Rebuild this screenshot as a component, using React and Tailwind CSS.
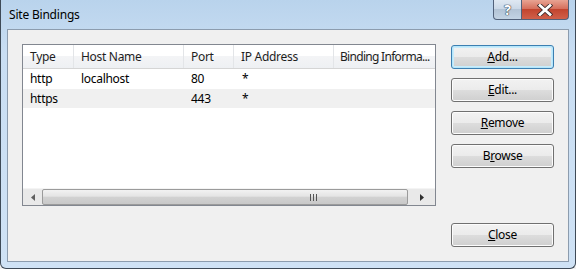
import React from 'react';

const font = { fontFamily: '"Noto Sans", "Segoe UI", Arial, sans-serif' };

const Btn = ({ children, primary = false }) => (
  <button
    className={
      primary
        ? 'w-[103px] h-[24px] rounded-[3px] border border-[#3c7fb1] shadow-[inset_0_0_0_1px_#b6e6fb,inset_0_0_0_2px_#c8ecfb] bg-[linear-gradient(#f2f2f2_0%,#ebebeb_50%,#dddddd_50%,#cfcfcf_100%)] text-[12px] tracking-[-0.3px] text-black flex items-center justify-center'
        : 'w-[103px] h-[24px] rounded-[3px] border border-[#707070] shadow-[inset_0_0_0_1px_#fcfcfc] bg-[linear-gradient(#f2f2f2_0%,#ebebeb_50%,#dddddd_50%,#cfcfcf_100%)] text-[12px] tracking-[-0.3px] text-black flex items-center justify-center'
    }
  >
    {children}
  </button>
);

const cols = [
  { label: 'Type', w: 'w-[51px]', h: 'pl-[7px] tracking-[-0.3px] border-r border-[#e3e5e8]' },
  { label: 'Host Name', w: 'w-[110px]', h: 'pl-[7px] tracking-[-0.3px] border-r border-[#e3e5e8]' },
  { label: 'Port', w: 'w-[50px]', h: 'pl-[7px] tracking-[-0.3px] border-r border-[#e3e5e8]' },
  { label: 'IP Address', w: 'w-[100px]', h: 'pl-[7px] tracking-[-0.3px] border-r border-[#e3e5e8]' },
  { label: 'Binding Informa...', w: 'w-[101px]', h: 'pl-[6px] tracking-[-0.7px]' },
];

const rows = [
  ['http', 'localhost', '80', '*', ''],
  ['https', '', '443', '*', ''],
];

export default function App() {
  return (
    <div style={font} className="w-[576px] h-[269px] bg-[#f0f0f0]">
      <div className="w-[576px] h-[269px] flex flex-col border-x border-b border-[#3e4a57] rounded-b-[6px] bg-[linear-gradient(180deg,#b9d3ec_0%,#c9def3_20%,#cfe2f5_100%)]">
        {/* title bar */}
        <div className="h-[29px] flex justify-between items-start">
          <span className="pl-[8px] pt-[9px] text-[12px] tracking-[-0.2px] text-black leading-none">Site Bindings</span>
          <div className="flex mr-[6px]">
            <div className="w-[29px] h-[20px] border border-[#51617a] border-t-0 rounded-bl-[4px] bg-[linear-gradient(#dfe8f2_0%,#c9d7e6_50%,#b3c4d6_50%,#c2d3e4_100%)] flex items-center justify-center text-[14px] font-bold text-white [text-shadow:0_0_1px_#2a3a4c,0_0_1px_#2a3a4c,0_0_1px_#2a3a4c]">
              ?
            </div>
            <div className="w-[47px] h-[20px] border border-[#51617a] border-t-0 border-l-0 rounded-br-[4px] bg-[linear-gradient(#e8a493_0%,#d6705d_45%,#c2452f_50%,#d0604a_100%)] flex items-center justify-center">
              <svg width="16" height="12" viewBox="0 0 16 12">
                <path d="M3 1.5 L13 10.5 M13 1.5 L3 10.5" stroke="#3a2a2a" strokeWidth="4.4" strokeLinecap="square" />
                <path d="M3 1.5 L13 10.5 M13 1.5 L3 10.5" stroke="#ffffff" strokeWidth="2.8" strokeLinecap="square" />
              </svg>
            </div>
          </div>
        </div>
        {/* client area */}
        <div className="mx-[6px] h-[233px] border border-[#8c9cae] bg-[#f0f0f0] flex pl-[14px] pt-[14px] pr-[14px] pb-[14px] gap-[15px]">
          <div className="w-[414px] h-[162px] border border-[#828790] bg-white flex flex-col">
            <div className="flex h-[24px] border-b border-[#d5d5d5] bg-[linear-gradient(#ffffff_0%,#ffffff_50%,#f3f4f6_50%,#eef0f3_100%)]">
              {cols.map((c) => (
                <div
                  key={c.label}
                  className={`${c.w} ${c.h} h-full flex items-center text-[12px] text-[#1e1e1e] whitespace-nowrap overflow-hidden`}
                >
                  {c.label}
                </div>
              ))}
            </div>
            {rows.map((r, ri) => (
              <div key={ri} className={`flex h-[19px] ${ri === 1 ? 'bg-[#f0f0f0] mt-[1px]' : ''}`}>
                {r.map((v, i) => (
                  <div key={i} className={`${cols[i].w} flex items-center text-[12px] tracking-[-0.3px] text-black ${i === 3 ? 'pl-[8px]' : 'pl-[7px]'}`}>
                    {v}
                  </div>
                ))}
              </div>
            ))}
            <div className="flex-1" />
            {/* horizontal scrollbar */}
            <div className="h-[17px] flex bg-[#e9e9e9] border-t border-[#f4f4f4]">
              <div className="w-[19px] flex items-center justify-center">
                <svg width="4" height="7" viewBox="0 0 4 7"><path d="M4 0 L0 3.5 L4 7 Z" fill="#606060" /></svg>
              </div>
              <div className="w-[366px] h-[16px] rounded-[2px] border border-[#9b9b9b] bg-[linear-gradient(#f2f2f2_0%,#e4e4e4_45%,#d2d2d2_50%,#c8c8c8_100%)] flex items-center justify-center">
                <div className="flex gap-[2px] ml-[176px]">
                  <div className="w-[1px] h-[7px] bg-[#555]" />
                  <div className="w-[1px] h-[7px] bg-[#555]" />
                  <div className="w-[1px] h-[7px] bg-[#555]" />
                </div>
              </div>
              <div className="flex-1 flex items-center justify-center">
                <svg width="4" height="7" viewBox="0 0 4 7"><path d="M0 0 L4 3.5 L0 7 Z" fill="#303030" /></svg>
              </div>
            </div>
          </div>
          <div className="flex flex-col justify-between pt-[1px] pb-[0px]">
            <div className="flex flex-col gap-[9px]">
              <Btn primary><span><u>A</u>dd...</span></Btn>
              <Btn><span><u>E</u>dit...</span></Btn>
              <Btn><span><u>R</u>emove</span></Btn>
              <Btn><span>B<u>r</u>owse</span></Btn>
            </div>
            <Btn><span><u>C</u>lose</span></Btn>
          </div>
        </div>
      </div>
    </div>
  );
}
